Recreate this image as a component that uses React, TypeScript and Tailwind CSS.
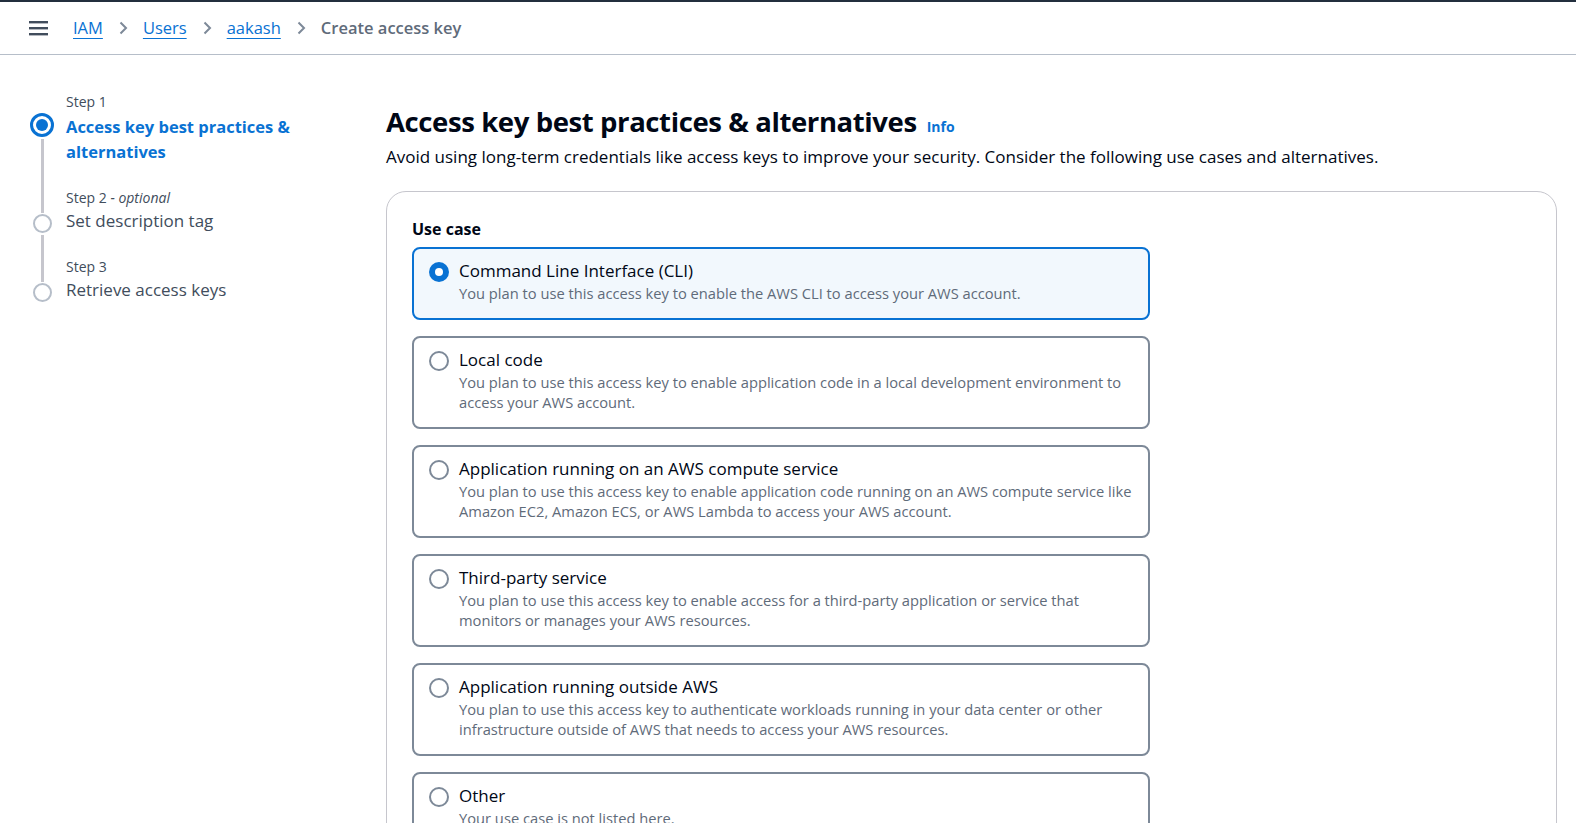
import React, { useState } from "react";

const FONT = { fontFamily: '"Open Sans", "Noto Sans", Arial, sans-serif' };

const OPTIONS = [
  {
    title: "Command Line Interface (CLI)",
    desc: "You plan to use this access key to enable the AWS CLI to access your AWS account.",
  },
  {
    title: "Local code",
    desc: "You plan to use this access key to enable application code in a local development environment to access your AWS account.",
  },
  {
    title: "Application running on an AWS compute service",
    desc: "You plan to use this access key to enable application code running on an AWS compute service like Amazon EC2, Amazon ECS, or AWS Lambda to access your AWS account.",
  },
  {
    title: "Third-party service",
    desc: "You plan to use this access key to enable access for a third-party application or service that monitors or manages your AWS resources.",
  },
  {
    title: "Application running outside AWS",
    desc: "You plan to use this access key to authenticate workloads running in your data center or other infrastructure outside of AWS that needs to access your AWS resources.",
  },
  {
    title: "Other",
    desc: "Your use case is not listed here.",
  },
];

function Chevron() {
  return (
    <svg width="16" height="16" viewBox="0 0 16 16" fill="none" className="mx-[12px]">
      <path d="M5.5 2.5 11 8l-5.5 5.5" stroke="#7d8998" strokeWidth="2" />
    </svg>
  );
}

function Step({
  label,
  optional,
  title,
  active,
  last,
}: {
  label: string;
  optional?: boolean;
  title: string;
  active?: boolean;
  last?: boolean;
}) {
  return (
    <div className="flex gap-[12px]">
      <div className={active ? "flex flex-col items-center w-[24px] pt-[21px]" : "flex flex-col items-center w-[24px] pt-[25px]"}>
        {active ? (
          <div className="w-[24px] h-[24px] rounded-full border-[3px] border-[#0972d3] flex items-center justify-center">
            <div className="w-[12px] h-[12px] rounded-full bg-[#0972d3]" />
          </div>
        ) : (
          <div className="w-[19px] h-[19px] rounded-full border-2 border-[#b6bec9] mt-[1px]" />
        )}
        {!last && <div className="w-[3px] flex-1 bg-[#c6c6cd] mt-[2px] -mb-[25px]" />}
      </div>
      <div className="pb-[24px]">
        <div className="text-[14px] leading-[20px] text-[#414d5c]">
          {label}
          {optional && <span className="italic"> - optional</span>}
        </div>
        <div
          className={
            active
              ? "mt-[2px] text-[16.5px] leading-[25px] font-bold text-[#0972d3] w-[240px]"
              : "text-[17px] leading-[25px] text-[#414d5c]"
          }
        >
          {title}
        </div>
      </div>
    </div>
  );
}

export default function App() {
  const [selected, setSelected] = useState(0);

  return (
    <div className="min-h-[823px] bg-white text-[#000716]" style={FONT}>
      {/* Top bar */}
      <div className="h-[2px] bg-[#232f3e]" />
      <div className="h-[53px] flex items-center border-b border-[#b6bec9] pl-[29px]">
        <svg width="19" height="16" viewBox="0 0 19 16" className="mr-[25px]">
          <rect x="0" y="1" width="19" height="2.4" fill="#414d5c" />
          <rect x="0" y="7" width="19" height="2.4" fill="#414d5c" />
          <rect x="0" y="13" width="19" height="2.4" fill="#414d5c" />
        </svg>
        <nav className="flex items-center text-[16.5px]">
          <a className="text-[#0972d3] underline underline-offset-[4px]">IAM</a>
          <Chevron />
          <a className="text-[#0972d3] underline underline-offset-[4px]">Users</a>
          <Chevron />
          <a className="text-[#0972d3] underline underline-offset-[4px]">aakash</a>
          <Chevron />
          <span className="text-[#5f6b7a] font-semibold">Create access key</span>
        </nav>
      </div>

      <div className="flex">
        {/* Side steps */}
        <aside className="w-[386px] shrink-0 pl-[30px] pt-[37px]">
          <Step label="Step 1" title="Access key best practices & alternatives" active />
          <Step label="Step 2" optional title="Set description tag" />
          <Step label="Step 3" title="Retrieve access keys" last />
        </aside>

        {/* Main */}
        <main className="flex-1 pr-[19px] pt-[49px]">
          <div className="flex items-baseline gap-[10px]">
            <h1 className="text-[27.5px] leading-[36px] font-bold tracking-[-0.4px]">
              Access key best practices &amp; alternatives
            </h1>
            <a className="text-[14px] font-bold text-[#0972d3]">Info</a>
          </div>
          <p className="text-[17px] leading-[26px] mt-[4px] text-[#000716]">
            Avoid using long-term credentials like access keys to improve your security. Consider the following use
            cases and alternatives.
          </p>

          <div className="mt-[21px] border border-[#c6c6cd] rounded-[20px] px-[25px] pt-[26px] pb-[20px]">
            <div className="text-[16px] font-bold leading-[22px] mb-[7px]">Use case</div>
            <div className="flex flex-col gap-[16px] w-[738px]">
              {OPTIONS.map((o, i) => {
                const on = selected === i;
                return (
                  <label
                    key={o.title}
                    onClick={() => setSelected(i)}
                    className={
                      on
                        ? "flex gap-[10px] rounded-[8px] border-2 border-[#0972d3] bg-[#f2f8fd] px-[15px] pt-[10px] pb-[15px] cursor-pointer"
                        : "flex gap-[10px] rounded-[8px] border-2 border-[#7d8998] bg-white px-[15px] pt-[10px] pb-[15px] cursor-pointer"
                    }
                  >
                    <div className="pt-[3px]">
                      {on ? (
                        <div className="w-[20px] h-[20px] rounded-full bg-[#0972d3] flex items-center justify-center">
                          <div className="w-[8px] h-[8px] rounded-full bg-white" />
                        </div>
                      ) : (
                        <div className="w-[20px] h-[20px] rounded-full border-2 border-[#7d8998] bg-white" />
                      )}
                    </div>
                    <div>
                      <div className="text-[17px] leading-[24px] text-[#000716]">{o.title}</div>
                      <div className="text-[14.7px] leading-[20px] text-[#5f6b7a]">{o.desc}</div>
                    </div>
                  </label>
                );
              })}
            </div>
          </div>
        </main>
      </div>
    </div>
  );
}
